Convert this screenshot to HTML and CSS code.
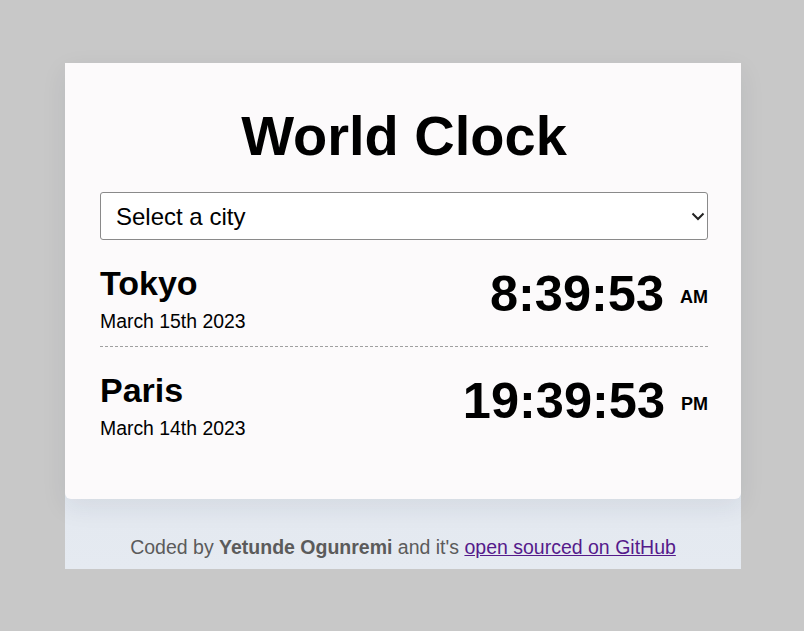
FILE: index.html
```html
<!DOCTYPE html>
<html lang="en">
<head>
<meta charset="utf-8">
<title>World Clock</title>
<link rel="stylesheet" href="styles.css">
</head>
<body>
<div class="container">
  <main class="card">
    <h1 class="title">World Clock</h1>
    <div class="select-wrap">
      <select class="city-select">
        <option>Select a city</option>
      </select>
      <svg class="chevron" width="14" height="9" viewBox="0 0 14 9" aria-hidden="true"><path d="M1.5 1.5 L7 7 L12.5 1.5" fill="none" stroke="#222" stroke-width="2"/></svg>
    </div>
    <div class="cities">
      <div class="city">
        <div class="city-info">
          <div class="city-name">Tokyo</div>
          <div class="city-date">March 15th 2023</div>
        </div>
        <div class="city-time">8:39:53<span class="ampm">AM</span></div>
      </div>
      <div class="city">
        <div class="city-info">
          <div class="city-name">Paris</div>
          <div class="city-date">March 14th 2023</div>
        </div>
        <div class="city-time">19:39:53<span class="ampm">PM</span></div>
      </div>
    </div>
  </main>
  <footer class="footer">
    Coded by <strong>Yetunde Ogunremi</strong> and it's <a class="footer-link" href="#">open sourced on GitHub</a>
  </footer>
</div>
</body>
</html>
```

FILE: styles.css
```css
html, body {
  margin: 0;
  padding: 0;
}

body {
  background: #c8c8c8;
  font-family: "Liberation Sans", Arial, sans-serif;
  color: #000;
  padding-top: 63px;
}

.container {
  width: 676px;
  margin-left: 65px;
  background: linear-gradient(180deg, #dadfe7 0%, #e5eaf1 100%);
}

.card {
  background: #fcfafb;
  padding: 41px 33px 46px 35px;
  border-radius: 0 0 6px 6px;
  box-shadow: 0 8px 26px rgba(30, 40, 60, 0.08);
  position: relative;
}

.title {
  margin: 0;
  text-align: center;
  font-size: 56px;
  line-height: 64px;
  font-weight: 700;
}

.select-wrap {
  position: relative;
  margin-top: 24px;
}

.city-select {
  display: block;
  width: 100%;
  height: 48px;
  box-sizing: border-box;
  -webkit-appearance: none;
  appearance: none;
  background: #fff;
  border: 1px solid #8a8a8a;
  border-radius: 3px;
  padding: 0 15px;
  font-family: "Liberation Sans", Arial, sans-serif;
  font-size: 24px;
  color: #000;
}

.chevron {
  position: absolute;
  right: 3px;
  top: 20px;
  pointer-events: none;
}

.city {
  display: flex;
  justify-content: space-between;
  align-items: flex-start;
  padding: 24px 0 14px;
}

.city + .city {
  border-top: 1px dashed #a0a0a0;
}

.city-name {
  font-size: 34px;
  line-height: 39px;
  font-weight: 700;
}

.city-date {
  margin-top: 7px;
  font-size: 19.4px;
  line-height: 22px;
}

.city-time {
  margin-top: 1px;
  font-size: 50.5px;
  line-height: 58px;
  font-weight: 700;
}

.ampm {
  font-size: 18px;
  margin-left: 16px;
  vertical-align: 8px;
}

.footer {
  padding: 38px 0 11px;
  line-height: 21px;
  text-align: center;
  font-size: 19.5px;
  color: #5b5b5b;
}

.footer strong {
  font-weight: 700;
}

.footer-link {
  color: #551a8b;
}
```
